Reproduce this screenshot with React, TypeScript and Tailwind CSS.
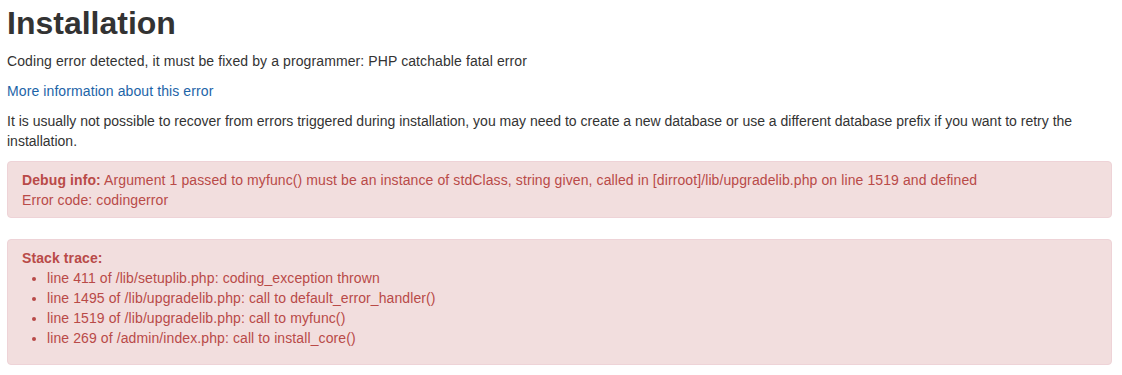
import React from "react";

const trace = [
  "line 411 of /lib/setuplib.php: coding_exception thrown",
  "line 1495 of /lib/upgradelib.php: call to default_error_handler()",
  "line 1519 of /lib/upgradelib.php: call to myfunc()",
  "line 269 of /admin/index.php: call to install_core()",
];

export default function App() {
  return (
    <div className="min-h-screen bg-white pl-[7px] pr-[10px] font-['Liberation_Sans',Arial,sans-serif] text-[14px] leading-[20px] text-[#333]">
      <h2 className="pt-[3px] mb-[8px] text-[32px] leading-[40px] font-bold text-[#333]">Installation</h2>
      <p className="mb-[10px] tracking-[0.1px]">Coding error detected, it must be fixed by a programmer: PHP catchable fatal error</p>
      <p className="mb-[10px] tracking-[0.1px]">
        <a href="#" className="text-[#1d64a8]">More information about this error</a>
      </p>
      <p className="mb-[10px]">
        It is usually not possible to recover from errors triggered during installation, you may need to create a new database or use a different database prefix if you want to retry the installation.
      </p>

      {/* Debug info */}
      <div className="mb-[21px] rounded-[4px] border border-[#eed3d7] bg-[#f2dede] pt-[8px] pb-[7px] pl-[14px] pr-[35px] tracking-[0.1px] text-[#b94a48]">
        <p>
          <span className="font-bold">Debug info:</span> Argument 1 passed to myfunc() must be an instance of stdClass, string given, called in [dirroot]/lib/upgradelib.php on line 1519 and defined
        </p>
        <p>Error code: codingerror</p>
      </div>

      {/* Stack trace */}
      <div className="rounded-[4px] border border-[#eed3d7] bg-[#f2dede] pt-[8px] pb-[8px] pl-[14px] pr-[35px] tracking-[0.1px] text-[#b94a48]">
        <p className="font-bold">Stack trace:</p>
        <ul className="mb-[8px] list-disc pl-[25px]">
          {trace.map((t, i) => (
            <li key={i}>{t}</li>
          ))}
        </ul>
      </div>
    </div>
  );
}
